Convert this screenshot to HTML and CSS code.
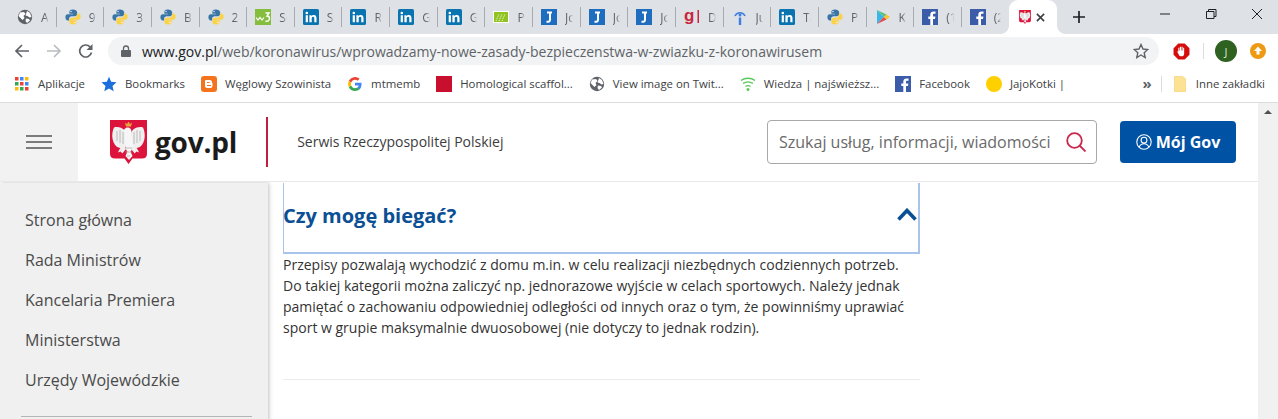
FILE: index.html
```html
<!DOCTYPE html>
<html lang="pl">
<head>
<meta charset="utf-8">
<title>gov.pl</title>
<link rel="stylesheet" href="styles.css">
</head>
<body>
<svg class="defs" width="0" height="0" aria-hidden="true">
  <symbol id="globe" viewBox="0 0 16 16"><circle cx="8" cy="8" r="7.2" fill="#5f6368"/><path d="M3 3.500 7 3 8.500 5 6.500 7 7.500 9 5.500 11 3 8.500 1.500 7zM10 2l3 2 1.500 4-2 .5-2-1.500-2-.5zM9 9.500l3 .5 1 1.500-3 2.500-1.500-2z" fill="#fff"/></symbol>
  <symbol id="py" viewBox="0 0 16 16"><path d="M8 .5c-3 0-3.600 1.100-3.600 2.500v1.700H8v.6H2.800C1.300 5.300.4 6.300.4 8.300s1 3.200 2.400 3.200h1.300V9.700c0-1.500 1.200-2.500 2.600-2.500h3.300c1.200 0 2.100-1 2.100-2.200V3C11.700 1.500 10.500.5 8 .5z" fill="#3a75a8"/><path d="M8 15.500c3 0 3.600-1.100 3.600-2.500v-1.700H8v-.6h5.200c1.500 0 2.400-1 2.400-3s-1-3.200-2.400-3.200h-1.300v1.800c0 1.500-1.200 2.500-2.600 2.500H6.500c-1.200 0-2.100 1-2.100 2.200V13c0 1.500 1.200 2.500 3.600 2.500z" fill="#fbd24a"/><circle cx="6" cy="2.500" r=".7" fill="#fff"/><circle cx="10" cy="13.500" r=".7" fill="#fff"/></symbol>
  <symbol id="in" viewBox="0 0 16 16"><rect width="16" height="16" rx="1.500" fill="#0a74b0"/><path d="M2.700 6.200h2.200v7H2.700zM3.800 2.700a1.300 1.300 0 1 1 0 2.600 1.300 1.300 0 0 1 0-2.600zM6.400 6.200h2.100v1c.4-.7 1.200-1.200 2.300-1.200 2.200 0 2.700 1.400 2.700 3.300v3.900h-2.200V9.700c0-.9-.1-1.900-1.200-1.900s-1.400.9-1.400 1.800v3.600H6.400z" fill="#fff"/></symbol>
  <symbol id="w3" viewBox="0 0 16 16"><rect width="16" height="16" fill="#85bd3f"/><path d="M1 8.500 3 11 5 8.500 7 11 9 8.500" fill="none" stroke="#fff" stroke-width="1.200"/><path d="M10.500 4h3.500l-2 3c2 0 2.500 1 2.500 2.500S13 13 10.500 12" fill="none" stroke="#fff" stroke-width="1.400"/></symbol>
  <symbol id="j" viewBox="0 0 16 16"><rect width="16" height="16" fill="#1f6dbe"/><path d="M6 3.500h5M9 3.500v7.500c0 1.500-1.500 2-3.500 1.800" fill="none" stroke="#fff" stroke-width="2"/></symbol>
  <symbol id="fb" viewBox="0 0 16 16"><rect width="16" height="16" fill="#3b5ca8"/><path d="M11 16v-6h2l.4-2.500H11V6c0-.8.3-1.200 1.200-1.200h1.300V2.500C13 2.400 12.300 2.400 11.500 2.400 9.600 2.400 8.300 3.500 8.300 5.700v1.800H6.300V10h2v6z" fill="#fff"/></symbol>
  <symbol id="eagle" viewBox="0 0 37 44">
    <path d="M0 0h37v34c0 3-2 4.500-5 4.500h-9.500L18.500 44l-4-5.500H5c-3 0-5-1.500-5-4.500z" fill="#dc143c"/>
    <path d="M20 15C22 9 27 6 33 7.500 36 14 35 22 31 26c-3 2.500-7 3-9.500 .5z" fill="#efefef"/>
    <path d="M17 15C15 9 10 6 4 7.500 1 14 2 22 6 26c3 2.500 7 3 9.500 .5z" fill="#efefef"/>
    <path d="M15 13.500c.3-2-.5-2.800-2.500-3.300 1-.3 1.800-.8 2.500-1.500 1-1.500 4-1.700 5.500 0 1.200 1.200 1 3 .5 4.800l2 10c0 4-1 6.500-2.500 8l2 4.500-3.500 4-3.500-4 2-4.500c-1.500-1.500-2.500-4-2.500-8z" fill="#f6f6f6"/>
    <path d="M14 26c-3 1-5 3-6 6.500l2.500-1 2 2 1-1.500 2.500-3zM23 26c3 1 5 3 6 6.500l-2.500-1-2 2-1-1.500-2.500-3z" fill="#efefef"/>
    <path d="M7 11v10M10 10v13M13 12v12M24 12v12M27 10v13M30 11v10M15 28h7M15.500 32h6M17 36h3" stroke="#b4b4b4" stroke-width=".9" fill="none"/>
    <path d="M16 6.500h5l1-4-2 1.500-1.500-2.500L17 4l-2-1.500z" fill="#e9a33b"/>
  </symbol>
</svg>

<div class="tabstrip">
  <div class="tab"><svg class="ico"><use href="#globe"/></svg><span class="tabtext">A</span></div>
  <div class="tab"><svg class="ico"><use href="#py"/></svg><span class="tabtext">9.</span></div>
  <div class="tab"><svg class="ico"><use href="#py"/></svg><span class="tabtext">3.</span></div>
  <div class="tab"><svg class="ico"><use href="#py"/></svg><span class="tabtext">Bi</span></div>
  <div class="tab"><svg class="ico"><use href="#py"/></svg><span class="tabtext">2.</span></div>
  <div class="tab"><svg class="ico"><use href="#w3"/></svg><span class="tabtext">Sc</span></div>
  <div class="tab"><svg class="ico"><use href="#in"/></svg><span class="tabtext">Sc</span></div>
  <div class="tab"><svg class="ico"><use href="#in"/></svg><span class="tabtext">Ri</span></div>
  <div class="tab"><svg class="ico"><use href="#in"/></svg><span class="tabtext">G</span></div>
  <div class="tab"><svg class="ico"><use href="#in"/></svg><span class="tabtext">G</span></div>
  <div class="tab"><svg class="ico" viewBox="0 0 16 16"><rect y="2" width="16" height="12" fill="#fff"/><rect x="1" y="3" width="14" height="10" fill="#8fc31f"/><path d="M3 12 6 5M6 12 9 5M9 12 12 5" stroke="#fff" stroke-width="1" stroke-dasharray="1 1"/></svg><span class="tabtext">Py</span></div>
  <div class="tab"><svg class="ico"><use href="#j"/></svg><span class="tabtext">Jc</span></div>
  <div class="tab"><svg class="ico"><use href="#j"/></svg><span class="tabtext">Jc</span></div>
  <div class="tab"><svg class="ico"><use href="#j"/></svg><span class="tabtext">Jc</span></div>
  <div class="tab"><svg class="ico" viewBox="0 0 16 16"><text x="0" y="12" class="gd">g</text><rect x="13.500" y="1" width="1.500" height="13" fill="#c9253c"/></svg><span class="tabtext">D</span></div>
  <div class="tab"><svg class="ico" viewBox="0 0 16 16"><path d="M3 7A5.500 5.500 0 0 1 13 7" fill="none" stroke="#3f7de0" stroke-width="1.500"/><circle cx="8" cy="6" r="1.500" fill="#3f7de0"/><rect x="6.800" y="8.500" width="2.400" height="7.500" fill="#3f7de0"/></svg><span class="tabtext">Ju</span></div>
  <div class="tab"><svg class="ico"><use href="#in"/></svg><span class="tabtext">Ta</span></div>
  <div class="tab"><svg class="ico"><use href="#py"/></svg><span class="tabtext">P</span></div>
  <div class="tab"><svg class="ico" viewBox="0 0 16 16"><path d="M2 1v14l7-7z" fill="#3bb6e8"/><path d="M2 1l7 7 2.500-2.500z" fill="#57c27a"/><path d="M2 15l7-7 2.500 2.500z" fill="#e8484b"/><path d="M9 8l2.500-2.500L15 8l-3.500 2.500z" fill="#f8c630"/></svg><span class="tabtext">K</span></div>
  <div class="tab"><svg class="ico"><use href="#fb"/></svg><span class="tabtext">(1</span></div>
  <div class="tab tab-last"><svg class="ico"><use href="#fb"/></svg><span class="tabtext">(2</span></div>
  <div class="tab tab-active"><svg class="tab-emblem"><use href="#eagle"/></svg><svg class="tabclose" viewBox="0 0 10 10"><path d="M1 1l8 8M9 1l-8 8" stroke="#3c4043" stroke-width="1.800"/></svg></div>
  <svg class="newtab" viewBox="0 0 12 12"><path d="M6 0v12M0 6h12" stroke="#202124" stroke-width="1.700"/></svg>
  <div class="winctl">
    <svg class="winbtn" viewBox="0 0 12 12"><path d="M1 6h10" stroke="#202124"/></svg>
    <svg class="winbtn" viewBox="0 0 12 12"><path d="M1.500 3.500h7.500v7h-7.500zM3.500 3.500v-2h7.500v7h-2" fill="none" stroke="#202124"/></svg>
    <svg class="winbtn" viewBox="0 0 12 12"><path d="M1 1l10 10M11 1l-10 10" stroke="#202124"/></svg>
  </div>
</div>

<div class="toolbar">
  <svg class="navbtn" viewBox="0 0 16 16"><path d="M15 8H2M8 2 2 8l6 6" fill="none" stroke="#5f6368" stroke-width="1.700"/></svg>
  <svg class="navbtn" viewBox="0 0 16 16"><path d="M1 8h13M8 2l6 6-6 6" fill="none" stroke="#b9bcc0" stroke-width="1.700"/></svg>
  <svg class="navbtn" viewBox="0 0 16 16"><path d="M13.500 9.500A6 6 0 1 1 12 3.800" fill="none" stroke="#5f6368" stroke-width="1.700"/><path d="M14.500 1v6h-6z" fill="#5f6368"/></svg>
  <div class="omnibox">
    <svg class="lock" viewBox="0 0 10 12"><path d="M2.500 5V3.500a2.500 2.500 0 0 1 5 0V5" fill="none" stroke="#5f6368" stroke-width="1.300"/><rect y="5" width="10" height="7" rx="1" fill="#5f6368"/></svg>
    <span class="url"><span class="url-host">www.gov.pl</span>/web/koronawirus/wprowadzamy-nowe-zasady-bezpieczenstwa-w-zwiazku-z-koronawirusem</span>
    <svg class="bookstar" viewBox="0 0 16 16"><path d="M8 1.500l2 4.500 4.800.5-3.600 3.200 1 4.800L8 12l-4.200 2.500 1-4.800L1.200 6.500 6 6z" fill="none" stroke="#5f6368" stroke-width="1.400"/></svg>
  </div>
  <div class="exts">
    <svg class="ext-block" viewBox="0 0 16 16"><path d="M5 .5h6L15.500 5v6L11 15.500H5L.5 11V5z" fill="#d40c0c"/><path d="M5 8V4.500h1V7h.5V3.500h1V7H8V3.500h1V7h.5V4.500h1V10c0 1.500-1 2.500-2.500 2.500S5.500 11.500 5 10L3.800 8z" fill="#fff"/></svg>
    <span class="ext-sep"></span>
    <span class="avatar">J</span>
    <svg class="ext-up" viewBox="0 0 16 16"><circle cx="8" cy="8" r="8" fill="#ef9a14"/><path d="M8 3.500 12 8H9.500v3.500h-3V8H4z" fill="#fff"/></svg>
  </div>
</div>

<div class="bookmarks">
  <div class="bm bm-apps"><svg class="ico" viewBox="0 0 14 14"><rect width="3.500" height="3.500" fill="#ea4335"/><rect x="5" width="3.500" height="3.500" fill="#4285f4"/><rect x="10" width="3.500" height="3.500" fill="#fbbc04"/><rect y="5" width="3.500" height="3.500" fill="#34a853"/><rect x="5" y="5" width="3.500" height="3.500" fill="#ea4335"/><rect x="10" y="5" width="3.500" height="3.500" fill="#4285f4"/><rect y="10" width="3.500" height="3.500" fill="#fbbc04"/><rect x="5" y="10" width="3.500" height="3.500" fill="#34a853"/><rect x="10" y="10" width="3.500" height="3.500" fill="#ea4335"/></svg><span>Aplikacje</span></div>
  <div class="bm"><svg class="ico" viewBox="0 0 16 16"><path d="M8 .8l2.200 5 5.300.5-4 3.600 1.200 5.300L8 12.400l-4.700 2.800 1.200-5.300-4-3.600 5.300-.5z" fill="#1a6fdc"/></svg><span>Bookmarks</span></div>
  <div class="bm"><svg class="ico" viewBox="0 0 16 16"><rect width="16" height="16" rx="3" fill="#f4731f"/><path d="M5 4h4c1 0 2 1 2 2v1h.5v3c0 1-1 2-2 2H6c-1 0-2-1-2-2V5c0-.5.500-1 1-1z" fill="#fff"/><path d="M6 6.500h2.500M6 9.500h4" stroke="#f4731f" stroke-width="1.100"/></svg><span>Węglowy Szowinista</span></div>
  <div class="bm"><svg class="ico" viewBox="0 0 16 16"><path d="M14.500 8.200c0-.6 0-1-.1-1.500H8v2.800h3.700c-.2 1-.7 1.700-1.500 2.200l2.300 1.800c1.300-1.300 2-3 2-5.300z" fill="#4285f4"/><path d="M8 15c1.900 0 3.400-.6 4.500-1.700l-2.300-1.800c-.6.400-1.300.7-2.200.7-1.800 0-3.300-1.200-3.800-2.800l-2.400 1.800C2.900 13.500 5.200 15 8 15z" fill="#34a853"/><path d="M4.200 9.400a4 4 0 0 1 0-2.800L1.800 4.800a7 7 0 0 0 0 6.400z" fill="#fbbc04"/><path d="M8 3.800c1 0 1.900.3 2.600 1l2-2A7 7 0 0 0 1.800 4.800l2.400 1.800C4.700 5 6.200 3.800 8 3.800z" fill="#ea4335"/></svg><span>mtmemb</span></div>
  <div class="bm"><svg class="ico" viewBox="0 0 16 16"><rect width="16" height="16" fill="#c8102e"/></svg><span>Homological scaffol...</span></div>
  <div class="bm"><svg class="ico"><use href="#globe"/></svg><span>View image on Twit...</span></div>
  <div class="bm"><svg class="ico" viewBox="0 0 16 16"><path d="M1 4.500c4-3 10-3 14 0M3 7.500c3-2 7-2 10 0M5.500 10.500c1.500-1 3.500-1 5 0" fill="none" stroke="#5ac85a" stroke-width="1.300"/><circle cx="8" cy="13.500" r="1.500" fill="#5ac85a"/></svg><span>Wiedza | najświeższ...</span></div>
  <div class="bm"><svg class="ico"><use href="#fb"/></svg><span>Facebook</span></div>
  <div class="bm"><svg class="ico" viewBox="0 0 16 16"><circle cx="8" cy="8" r="8" fill="#ffd000"/></svg><span>JajoKotki |</span></div>
  <div class="bm-right">
    <span class="bm-more">»</span>
    <span class="bm-sep"></span>
    <div class="bm bm-last"><svg class="folder" viewBox="0 0 12 16"><path d="M0 0h8l4 3v13H0z" fill="#fde293" stroke="#e8cf82" stroke-width=".5"/></svg><span>Inne zakładki</span></div>
  </div>
</div>

<div class="page">
  <div class="main">
    <header class="site-header">
      <button class="burger" aria-label="Menu"><span></span><span></span><span></span></button>
      <div class="brand">
        <svg class="emblem"><use href="#eagle"/></svg>
        <span class="brand-name">gov.pl</span>
      </div>
      <span class="brand-rule"></span>
      <span class="brand-sub">Serwis Rzeczypospolitej Polskiej</span>
      <div class="search">
        <span class="search-text">Szukaj usług, informacji, wiadomości</span>
        <svg class="search-ico" viewBox="0 0 20 20"><circle cx="8.500" cy="8.500" r="7.300" fill="none" stroke="#c9264b" stroke-width="1.800"/><path d="M13.500 13.500 19.500 19.500" stroke="#c9264b" stroke-width="1.800"/></svg>
      </div>
      <a class="login"><svg class="login-ico" viewBox="0 0 16 16"><circle cx="8" cy="8" r="7.200" fill="none" stroke="#fff" stroke-width="1.100"/><circle cx="8" cy="6.200" r="2.900" fill="none" stroke="#fff" stroke-width="1.100"/><path d="M3.200 13c1-2.300 2.600-3.200 4.800-3.200s3.800.9 4.800 3.200" fill="none" stroke="#fff" stroke-width="1.100"/></svg>Mój Gov</a>
    </header>
    <div class="layout">
      <aside class="sidebar">
        <nav class="side-nav">
          <a>Strona główna</a>
          <a>Rada Ministrów</a>
          <a>Kancelaria Premiera</a>
          <a>Ministerstwa</a>
          <a>Urzędy Wojewódzkie</a>
        </nav>
        <div class="side-rule"></div>
      </aside>
      <main class="content">
        <div class="acc-head">
          <h3>Czy mogę biegać?</h3>
          <svg class="chev" viewBox="0 0 20 13"><path d="M1.500 11.500 10 2.500l8.500 9" fill="none" stroke="#0b4f94" stroke-width="3.600"/></svg>
        </div>
        <p class="acc-body">Przepisy pozwalają wychodzić z domu m.in. w celu realizacji niezbędnych codziennych potrzeb.<br>Do takiej kategorii można zaliczyć np. jednorazowe wyjście w celach sportowych. Należy jednak<br>pamiętać o zachowaniu odpowiedniej odległości od innych oraz o tym, że powinniśmy uprawiać<br>sport w grupie maksymalnie dwuosobowej (nie dotyczy to jednak rodzin).</p>
        <div class="acc-rule"></div>
      </main>
    </div>
  </div>
  <div class="scrollbar"><span class="scroll-up"></span></div>
</div>
</body>
</html>
```
FILE: styles.css
```css
* { box-sizing: border-box; }
html, body { margin: 0; height: 100%; overflow: hidden; background: #fff; }
body { width: 1278px; height: 419px; font-family: "Open Sans", "Noto Sans", sans-serif; display: flex; flex-direction: column; }
.defs { position: absolute; }
.ico { width: 16px; height: 16px; flex: none; display: block; }

.tabstrip { height: 34px; background: #dee1e6; display: flex; align-items: center; padding-left: 9px; flex: none; }
.tab { width: 47.65px; height: 34px; flex: none; display: flex; align-items: center; padding: 0 8px; gap: 8px; position: relative; font-size: 12px; color: #5f6368; }
.tab::after { content: ""; position: absolute; right: 0; top: 7px; height: 20px; width: 1px; background: #a8abb0; }
.tab-last::after { display: none; }
.tabtext { width: 14px; overflow: hidden; white-space: nowrap; -webkit-mask-image: linear-gradient(90deg, #000 50%, transparent); mask-image: linear-gradient(90deg, #000 50%, transparent); }
.gd { font: bold 17px "Liberation Sans", sans-serif; fill: #c9253c; }
.tab-active { background: #fff; border-radius: 9px 9px 0 0; padding-left: 10px; gap: 5px; }
.tab-active::before, .tab-active::after { content: ""; position: absolute; bottom: 0; top: auto; width: 8px; height: 8px; background: radial-gradient(circle at 0 0, transparent 7.500px, #fff 8px); }
.tab-active::before { left: -8px; }
.tab-active::after { right: -8px; background: radial-gradient(circle at 100% 0, transparent 7.500px, #fff 8px); }
.tab-emblem { width: 12px; height: 14px; flex: none; display: block; }
.tabclose { width: 9px; height: 9px; flex: none; }
.newtab { width: 12px; height: 12px; margin-left: 16px; flex: none; }
.winctl { margin-left: auto; display: flex; align-self: flex-start; }
.winbtn { width: 12px; height: 12px; margin: 8px 15px 0 19px; flex: none; overflow: visible; }

.toolbar { height: 34px; flex: none; background: #fff; display: flex; align-items: center; padding: 0 0 0 14px; }
.navbtn { width: 16px; height: 16px; margin-right: 16px; flex: none; }
.omnibox { width: 1051px; height: 28px; margin-left: -2px; background: #f1f3f4; border-radius: 14px; display: flex; align-items: center; padding: 0 10px 0 13px; font-size: 14px; color: #5f6368; }
.lock { width: 10px; height: 12px; flex: none; margin-right: 11px; }
.url { white-space: nowrap; flex: 1; }
.url-host { color: #202124; }
.bookstar { width: 16px; height: 16px; flex: none; }
.exts { display: flex; align-items: center; margin-left: 14px; }
.ext-block { width: 17px; height: 17px; flex: none; }
.ext-sep { width: 1px; height: 16px; background: #dadce0; margin: 0 11px 0 13px; }
.avatar { width: 22px; height: 22px; border-radius: 50%; background: #2f6121; color: #d8e8c8; font-size: 11px; display: flex; align-items: center; justify-content: center; margin-right: 13px; }
.ext-up { width: 16px; height: 16px; flex: none; }

.bookmarks { height: 35px; flex: none; background: #fff; display: flex; align-items: center; padding: 0 0 3px 7px; font-size: 11.4px; color: #3c4043; border-bottom: 1px solid #dcdcdc; }
.bm { display: flex; align-items: center; gap: 8px; padding: 0 8px; white-space: nowrap; }
.bm-apps .ico { width: 14px; height: 14px; margin-right: 1px; }
.bm-right { margin-left: auto; display: flex; align-items: center; }
.bm-more { font-size: 15px; color: #5f6368; font-weight: 700; margin-right: 9px; line-height: 1; }
.bm-sep { width: 1px; height: 16px; background: #dadce0; margin-right: 4px; }
.bm-last { padding-right: 13px; }
.folder { width: 12px; height: 16px; flex: none; margin: 0 2px 0 0; }

.page { flex: 1; min-height: 0; display: flex; }
.main { flex: 1; min-width: 0; display: flex; flex-direction: column; }
.scrollbar { width: 20px; flex: none; background: #f1f1f1; display: flex; justify-content: center; padding-top: 7px; }
.scroll-up { width: 0; height: 0; border-left: 4px solid transparent; border-right: 4px solid transparent; border-bottom: 4px solid #505050; }

.site-header { height: 79px; flex: none; display: flex; align-items: center; border-bottom: 1px solid #e8e8e8; }
.burger { width: 78px; height: 100%; background: #f2f2f2; border: 0; padding: 0; display: flex; flex-direction: column; align-items: center; justify-content: center; gap: 4px; flex: none; margin-right: 32px; }
.burger span { width: 26px; height: 2px; background: #7b7b7b; display: block; }
.brand { display: flex; align-items: center; gap: 8px; }
.emblem { width: 37px; height: 44px; display: block; }
.brand-name { font-size: 28px; font-weight: 700; color: #1b1b1b; line-height: 1; letter-spacing: -.2px; }
.brand-rule { width: 2px; height: 50px; background: #c01e3e; margin: 0 29px; flex: none; }
.brand-sub { font-size: 14px; color: #3c3c3c; white-space: nowrap; padding-bottom: 2px; }
.search { margin-left: auto; width: 330px; height: 44px; border: 1px solid #a8a8a8; border-radius: 4px; display: flex; align-items: center; padding: 0 10px 0 11px; justify-content: space-between; flex: none; }
.search-text { font-size: 16px; color: #6a6a6a; white-space: nowrap; }
.search-ico { width: 20px; height: 20px; flex: none; }
.login { width: 116px; height: 42px; background: #0052a5; border-radius: 4px; color: #fff; font-size: 16px; font-weight: 700; display: flex; align-items: center; justify-content: center; gap: 4px; margin: 0 22px 0 23px; flex: none; }
.login-ico { width: 16px; height: 16px; flex: none; }

.layout { flex: 1; min-height: 0; display: flex; padding-top: 1px; overflow: hidden; }
.sidebar { width: 268px; flex: none; background: #f0f0f0; box-shadow: 1px 0 4px rgba(0,0,0,.25); padding-top: 17px; height: 300px; }
.side-nav { display: flex; flex-direction: column; }
.side-nav a { height: 40px; display: flex; align-items: center; padding-left: 25px; font-size: 16px; color: #4a4a4a; }
.side-rule { height: 1px; background: #b5b5b5; margin: 16px 16px 0 21px; }

.content { width: 637px; margin-left: 15px; flex: none; }
.acc-head { height: 71px; border: solid #a9c4ea; border-width: 0 2px 2px 1.500px; display: flex; align-items: center; justify-content: space-between; padding-bottom: 5px; }
.acc-head h3 { margin: 0 0 0 -1px; font-size: 20px; font-weight: 700; color: #0b4f94; }
.chev { width: 20px; height: 13px; flex: none; margin: 0 1px 1px 0; }
.acc-body { margin: 0; font-size: 14px; line-height: 21px; color: #333; white-space: nowrap; }
.acc-rule { height: 1px; background: #ebebeb; margin-top: 41px; }
```
